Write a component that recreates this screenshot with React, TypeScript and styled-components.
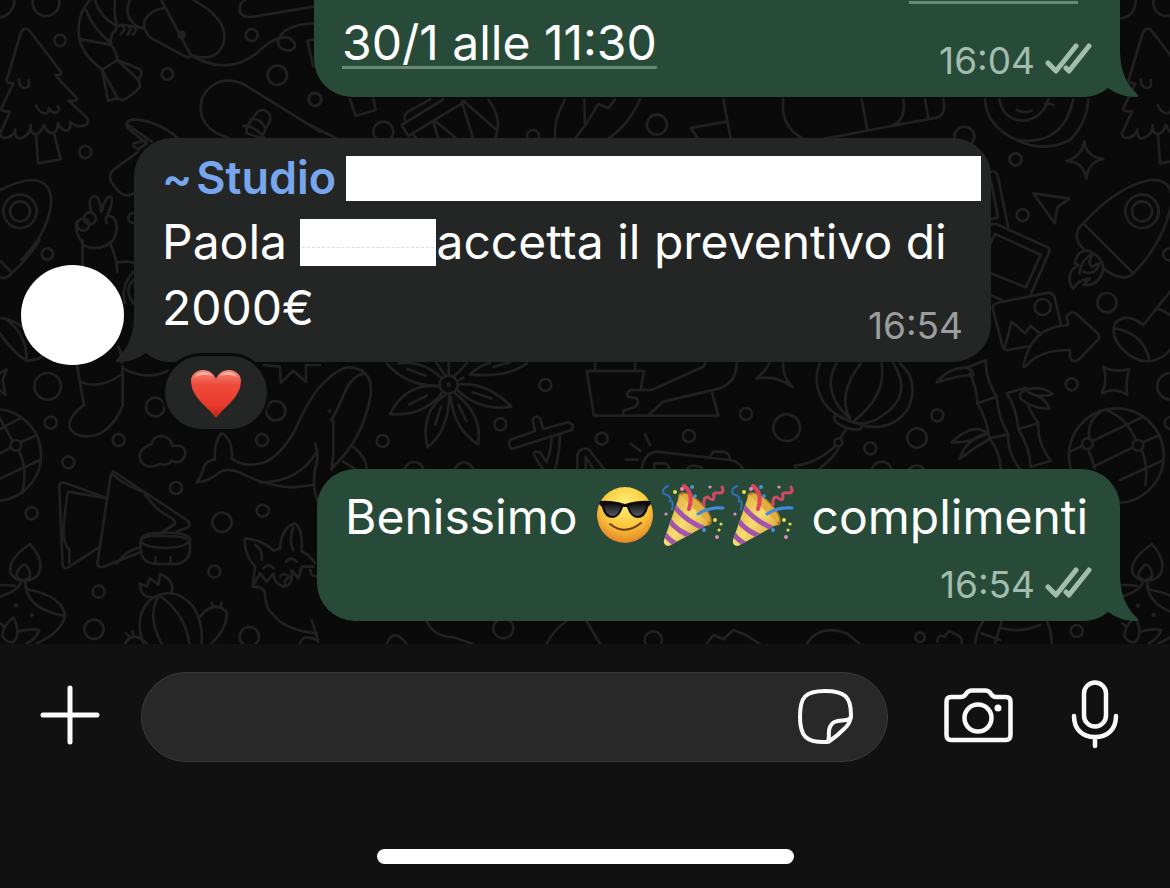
import React from "react";
import styled, { createGlobalStyle, css } from "styled-components";

const color = {
  wallpaper: "#0a0a0a",
  doodle: "#212121",
  outgoing: "#284b39",
  incoming: "#242625",
  outgoingMeta: "#a2bcae",
  incomingMeta: "#9c9d9d",
  linkRule: "#698877",
  sender: "#77a6ee",
  bar: "#111111",
  field: "#282828",
  fieldEdge: "#3a3a3a",
};

const GlobalStyle = createGlobalStyle`
  * { box-sizing: border-box; }
  body {
    margin: 0;
    background: ${color.bar};
    font-family: Inter, "Liberation Sans", sans-serif;
    color: #fff;
  }
`;

const Screen = styled.div`
  display: flex;
  flex-direction: column;
  height: 100vh;
`;

const Chat = styled.main`
  position: relative;
  flex: 1;
  min-height: 0;
  display: flex;
  flex-direction: column;
  justify-content: flex-end;
  padding-bottom: 23px;
  overflow: hidden;
  background: ${color.wallpaper};
`;

const WallpaperArt = styled.svg`
  position: absolute;
  inset: 0;
  width: 100%;
  height: 100%;
  fill: none;
  stroke: ${color.doodle};
  stroke-width: 8;
  stroke-linecap: round;
  stroke-linejoin: round;
`;

const Row = styled.div<{ $side: "in" | "out"; $gap?: number }>`
  position: relative;
  display: flex;
  flex-shrink: 0;
  align-items: flex-end;
  gap: 10px;
  justify-content: ${(p) => (p.$side === "out" ? "flex-end" : "flex-start")};
  padding: 0 50px 0 21px;
  margin-bottom: ${(p) => p.$gap ?? 0}px;
`;

const Avatar = styled.div`
  flex-shrink: 0;
  width: 103px;
  height: 100px;
  margin-bottom: -3px;
  border-radius: 50%;
  background: #fff;
`;

const Bubble = styled.article<{ $side: "in" | "out"; $width: number }>`
  position: relative;
  width: ${(p) => p.$width}px;
  max-width: 100%;
  padding: ${(p) => (p.$side === "out" ? "15px 28px 14px" : "9px 28px 14px")};
  border-radius: 38px;
  background: ${(p) => color[p.$side === "out" ? "outgoing" : "incoming"]};
`;

const TailArt = styled.svg<{ $side: "in" | "out" }>`
  position: absolute;
  bottom: 0;
  width: 52px;
  height: 49px;
  ${(p) =>
    p.$side === "out"
      ? css`
          right: -20px;
          fill: ${color.outgoing};
        `
      : css`
          left: -20px;
          fill: ${color.incoming};
          transform: scaleX(-1);
        `}
`;

const Body = styled.p`
  position: relative;
  margin: 0;
  font-size: 48px;
  line-height: 66px;
`;

const Sender = styled.h2`
  display: flex;
  align-items: center;
  gap: 4px;
  margin: 0 -18px 0 0;
  font-size: 45px;
  font-weight: 600;
  line-height: 62px;
  color: ${color.sender};
  white-space: nowrap;
`;

const NameMask = styled.span`
  flex: 1;
  height: 45px;
  margin-left: 6px;
  background: #fff;
`;

const WordMask = styled.span`
  position: relative;
  display: inline-block;
  width: 136px;
  height: 47px;
  vertical-align: -7px;
  background: #fff;

  &::after {
    content: "";
    position: absolute;
    left: 2px;
    right: 2px;
    top: 28px;
    border-top: 1px dashed #dcdcdc;
  }
`;

const DateLink = styled.a`
  color: inherit;
  text-decoration: underline;
  text-decoration-color: ${color.linkRule};
  text-decoration-thickness: 3px;
  text-underline-offset: 6px;
`;

const LinkTail = styled.span`
  display: flex;
  align-items: flex-end;
  justify-content: flex-end;
  height: 66px;
  padding: 0 14px 6px 0;

  &::after {
    content: "";
    width: 169px;
    height: 3px;
    background: ${color.linkRule};
  }
`;

const Meta = styled.footer<{ $side: "in" | "out"; $tucked?: boolean }>`
  display: flex;
  justify-content: flex-end;
  align-items: center;
  gap: 10px;
  margin-top: ${(p) => (p.$tucked ? -37 : 13)}px;
  font-size: 37px;
  line-height: 44px;
  color: ${(p) => color[p.$side === "out" ? "outgoingMeta" : "incomingMeta"]};

  svg {
    margin-bottom: 4px;
  }
`;

const Reaction = styled.button`
  position: absolute;
  left: 28px;
  bottom: -70px;
  display: flex;
  align-items: center;
  justify-content: center;
  width: 108px;
  height: 79px;
  padding: 0;
  border: 3px solid ${color.wallpaper};
  border-radius: 40px;
  background: ${color.incoming};
`;

const EmojiArt = styled.svg`
  width: 69px;
  height: 66px;
  vertical-align: top;
`;

const Composer = styled.footer`
  flex-shrink: 0;
  padding: 28px 0 24px;
  background: ${color.bar};
`;

const Tools = styled.form`
  display: flex;
  align-items: center;
  padding: 0 51px 0 40px;
`;

const IconButton = styled.button<{ $before?: number }>`
  display: flex;
  flex-shrink: 0;
  margin: 0 0 0 ${(p) => p.$before ?? 0}px;
  padding: 0;
  border: 0;
  background: none;
  color: #fafafa;

  svg {
    fill: none;
    stroke: currentColor;
    stroke-linecap: round;
    stroke-linejoin: round;
  }
`;

const Field = styled.div`
  display: flex;
  flex: 1;
  min-width: 0;
  align-items: center;
  height: 90px;
  margin-left: 41px;
  padding: 0 34px 0 36px;
  border: 1px solid ${color.fieldEdge};
  border-radius: 45px;
  background: ${color.field};
`;

const TextBox = styled.input`
  flex: 1;
  min-width: 0;
  border: 0;
  outline: 0;
  background: none;
  font: inherit;
  font-size: 45px;
  color: inherit;
`;

const HomeIndicator = styled.div`
  width: 417px;
  max-width: 60%;
  height: 15px;
  margin: 87px auto 0;
  border-radius: 8px;
  background: #fff;
`;

/* Doodles are drawn at three times their final size, in patches. */
function Patch(props: {
  x: number;
  y: number;
  dots?: number[][];
  lines: string[];
}) {
  return (
    <g transform={`translate(${props.x} ${props.y}) scale(0.33333)`}>
      {(props.dots ?? []).map(([cx, cy, r], i) => (
        <circle key={i} cx={cx} cy={cy} r={r} />
      ))}
      {props.lines.map((d, i) => (
        <path key={i} d={d} />
      ))}
    </g>
  );
}

const treeLines = [
  "M78 86Q68 86 62 100L20 240Q18 250 40 250L4 325Q2 335 30 335L0 400Q0 418 25 412Q42 405 46 388Q44 420 64 414Q92 405 92 375Q90 402 108 402Q124 400 132 374Q140 400 160 400Q172 396 174 370Q186 392 200 392Q214 390 210 365Q232 385 256 376Q272 368 258 350L206 302Q232 306 230 294L166 226Q188 226 182 214L90 94Q84 86 78 86Z",
  "M108 404L114 490L182 478L162 400",
  "M56 238Q58 264 76 264Q92 262 86 240",
  "M108 316Q116 340 138 340Q148 336 146 324Q158 344 172 336Q184 328 172 318",
];

const lampLines = [
  "M90 342Q20 390 32 430Q60 470 110 440Q140 400 90 342Z",
  "M72 402Q45 425 50 440Q70 462 90 440Q92 415 72 402Z",
  "M0 500Q60 480 62 455M76 455Q75 480 90 480Q190 500 195 560Q180 610 110 640",
  "M76 470Q90 540 195 558M0 465Q30 465 45 468",
  "M40 562Q5 590 8 620Q20 640 40 636Q65 610 40 562Z",
  "M58 604Q90 595 118 600Q105 630 80 640M0 580l15 12",
  "M48 524v6M95 552v6M45 527h6M92 555h6",
];

function Wallpaper() {
  return (
    <WallpaperArt viewBox="0 0 1170 644" preserveAspectRatio="xMinYMin slice" aria-hidden>
      <Patch x={0} y={0} lines={treeLines} />
      <Patch x={1122} y={0} lines={treeLines} />
      <Patch
        x={0}
        y={0}
        dots={[[180, 121, 17], [502, 222, 17], [755, 105, 18], [832, 226, 29], [945, 298, 18], [256, 456, 18], [138, 8, 40], [60, 634, 50], [60, 634, 30], [250, 674, 18], [270, 655, 18], [400, 654, 15], [545, 104, 9], [545, 104, 4]]}
        lines={[
          "M0 52Q30 50 43 10V0",
          "M270 0Q232 40 236 100Q240 160 306 208L324 302L345 296L370 300Q400 285 420 260L416 240Q430 220 420 208L352 180Q352 160 332 132Q330 100 348 90Q346 66 400 80L430 84",
          "M258 30Q280 90 335 130M244 118L330 134M285 0Q300 50 345 75M345 0Q342 50 350 72",
          "M306 210L352 180L416 240M306 210L354 296",
          "M368 80q12 8 -6 22M386 80q12 8 -4 24M404 82q10 8 -6 22",
          "M484 0L572 165Q568 178 548 165L450 112Q425 85 435 60Q450 30 494 24",
          "M580 0Q690 60 670 130Q650 190 572 165M390 0Q370 40 400 70Q410 84 430 84",
          "M572 165Q680 230 770 160Q830 100 870 115Q900 140 870 152Q830 150 835 120Q850 75 940 70",
          "M735 0Q715 10 720 35Q728 55 760 50L940 20",
          "M940 118L922 122L940 200",
          "M960 395L730 252Q650 220 608 290Q585 360 650 400L690 416",
          "M740 380l30 -42q20 -18 38 4q8 16 -6 36l-20 40M730 378q30 -5 66 38M752 358q30 -5 44 28M740 380v20l50 16",
          "M536 416Q470 360 400 358Q370 364 384 385L440 430M384 375L455 425M440 430l-25 18q-20 -10 -14 -18l40 -10",
          "M415 455L340 510Q320 530 340 555Q370 600 402 580",
          "M0 570Q60 540 100 540Q150 545 154 600Q150 690 65 780",
          "M248 800V730Q220 690 232 664M275 640Q260 590 285 588Q300 590 304 636Q315 590 332 590Q344 600 322 645",
          "M320 670Q310 640 340 652Q360 680 340 720Q300 760 248 735",
        ]}
      />
      <Patch
        x={310}
        y={0}
        dots={[[15, 298, 20], [220, 395, 30], [669, 408, 18], [1041, 374, 30]]}
        lines={[
          "M120 298L137 348L197 330L190 298M0 375L80 416",
          "M285 360Q280 345 295 335L360 298M275 375L400 298M275 375L295 408L465 305M310 405L320 416",
          "M370 365L385 416M375 362L440 416M455 305L490 416M460 302L560 390M535 298Q580 360 555 416",
          "M765 298Q730 360 735 416M823 298L825 375M795 416L830 370L865 312L895 325L915 298M990 298Q960 370 895 416",
          "M1240 298L1262 416M1250 365L1142 384L1165 416",
        ]}
      />
      <Patch
        x={730}
        y={0}
        dots={[[703, 410, 30], [857, 478, 18], [1310, 8, 40]]}
        lines={[
          "M160 298Q150 380 220 416M395 298L412 392M520 298Q530 360 485 378L285 416M585 298L595 355M640 298Q650 345 620 353L485 378",
          "M765 298Q770 380 860 420Q940 460 1020 420Q1070 370 1075 298",
          "M808 298Q820 360 880 362Q940 355 955 298M860 330q25 12 45 2M945 310l25 4",
          "M1030 298Q1000 440 860 420M1218 0Q1215 50 1172 55",
        ]}
      />
      <Patch
        x={970}
        y={130}
        dots={[[136, 88, 18], [158, 255, 18], [411, 518, 29], [598, 373, 18], [516, 244, 50], [516, 244, 30], [218, 531, 24]]}
        lines={[
          "M343 34Q348 80 400 87Q355 95 349 145Q340 95 290 93Q335 80 343 34Z",
          "M190 190L298 206L262 232L254 280Z",
          "M340 280Q315 300 322 330Q330 350 345 360M400 415Q440 445 465 442Q480 440 490 430L340 280Q440 170 540 150Q610 145 605 220Q580 340 490 430",
          "M315 400Q320 360 355 362Q400 380 400 420Q385 470 340 465L360 445Q320 450 310 478Q290 450 305 420L325 405Z",
          "M328 430Q335 385 370 370Q350 400 365 410L388 400Q375 440 340 425",
          "M62 126Q80 120 84 140L116 300M62 150L84 262L62 268",
          "M62 285Q70 278 85 285L230 350Q242 356 236 370L180 498M62 340L75 312L212 374L168 472L62 430M62 495L100 512",
          "M180 648L115 660Q102 662 98 650L68 535Q70 520 85 518L235 488Q250 488 255 505L272 580M105 650L125 575L165 610L182 588L212 612",
          "M160 710Q180 590 295 585L290 560Q300 540 320 552L385 612Q390 620 385 628L325 690Q305 700 300 680V660Q220 660 180 695Q165 715 160 710Z",
          "M600 485L520 585Q470 545 435 580Q420 620 460 660Q500 700 545 693Q580 685 600 660M435 595Q520 610 538 690M560 535Q580 540 600 555",
        ]}
      />
      <Patch
        x={0}
        y={240}
        dots={[[142, 42, 17], [143, 439, 40], [152, 548, 18], [466, 501, 28], [827, 512, 29]]}
        lines={[
          "M118 0Q90 50 35 100Q15 120 0 112M0 62L36 98",
          "M248 0V75M330 10Q350 50 352 95M352 68Q380 62 400 68M400 95Q360 140 375 190M400 120Q370 150 400 190",
          "M0 234Q60 240 90 290M0 280Q40 340 80 362Q110 362 125 350M20 240Q80 280 80 362",
          "M0 400L20 388L8 420L16 465L0 450",
          "M230 372L252 495Q205 530 208 560Q225 600 290 585Q345 560 368 495V380M240 425Q300 450 362 405M355 320Q365 340 365 370",
          "M370 385Q440 425 510 390M790 375L840 380L842 428L880 392L918 425V375M920 375H960",
        ]}
      />
      <Patch
        x={0}
        y={430}
        dots={[[-15, 75, 138], [48, 46, 16], [356, 30, 18], [205, 97, 18], [95, 250, 18], [528, 174, 18], [786, 30, 18], [788, 242, 18], [666, 277, 29], [643, 425, 18], [296, 485, 18], [282, 598, 29], [748, 620, 29]]}
        lines={[
          "M62 36L110 16M34 52L0 70M38 34L20 0L-10 -50M56 60Q85 120 66 190M0 146L120 90M-5 0L60 -35",
          "M455 42Q460 18 485 18Q512 20 517 48Q558 40 556 75Q545 105 515 92Q505 108 480 102Q450 120 425 98Q405 60 455 42Z",
          "M322 205L190 157Q176 158 178 175L188 405Q192 420 205 412L296 352",
          "M322 205L205 185Q200 190 190 300Q190 340 208 360V400",
          "M530 305L565 292Q575 282 560 270L340 124Q332 130 330 150L292 400Q295 415 310 410L425 365",
          "M340 135Q380 170 430 185Q460 230 490 250Q540 275 520 285L490 304M350 400Q380 360 420 352",
          "M422 330Q425 308 496 308Q565 308 570 328Q565 352 496 354Q425 352 422 330V360Q425 400 470 402H530Q570 395 570 355V330M430 325Q450 315 496 318Q550 318 560 328M466 382v16M512 382v16",
          "M590 157Q625 155 655 130Q680 110 720 128Q800 170 880 172L940 165M590 157Q605 140 612 110Q620 90 645 88Q640 40 665 8Q700 30 695 85Q730 115 790 98Q840 80 885 0Q925 -90 960 -130",
          "M780 158Q900 155 950 65M945 40Q960 80 945 120Q935 170 955 220",
          "M470 500Q420 510 420 460L440 470L450 445L475 465L480 432Q525 450 515 490",
          "M430 640Q400 560 450 510Q520 460 580 530Q610 580 605 640M475 500Q440 560 485 640M480 498Q555 550 568 640",
          "M600 560Q640 510 680 545Q685 590 635 640M440 640Q400 600 375 640M635 518l4 12M665 518l-4 12M378 610l8 8M398 603l2 10",
          "M950 610Q850 600 815 548Q800 540 795 500Q800 470 758 470L765 410Q730 370 735 325Q790 330 820 362L840 355Q845 290 885 280Q910 300 905 365Q925 370 945 400",
          "M765 345Q790 360 785 390M880 292Q865 330 880 362M790 415q15 -18 32 0M858 395q15 -18 32 0M840 440Q850 425 868 440L855 452V465",
          "M758 470L780 430L800 455L820 430Q820 460 850 470Q880 470 875 420L895 445L905 410H940M930 420l5 15l15 5M900 640Q910 610 950 630M935 570l20 65",
        ]}
      />
      <Patch x={0} y={430} lines={lampLines} />
      <Patch x={1122} y={430} lines={lampLines} />
      <Patch
        x={320}
        y={355}
        dots={[[28, 168, 2], [386, 89, 27], [386, 89, 3], [676, 90, 18], [541, 208, 18], [188, 258, 18], [845, 251, 18], [1107, 243, 18], [282, 350, 29], [432, 352, 29]]}
        lines={[
          "M0 95Q60 30 100 38Q160 50 152 120Q130 250 40 335M35 345L40 300V200L35 195Q60 150 80 100Q100 60 135 55M100 275Q140 310 140 340M70 320L105 342",
          "M200 25Q260 95 360 92M235 25Q310 15 365 70M210 177Q260 80 358 95M210 177Q310 185 365 115",
          "M322 277Q300 170 375 120M322 277Q385 230 388 120M474 268Q490 180 405 115M474 268Q400 220 392 125",
          "M574 155Q500 80 415 88M574 155Q480 170 412 105M620 25Q560 70 450 58Q480 30 510 24",
          "M350 25L376 62M386 25V58M440 25L402 65M262 42l55 20M268 148l52 -26M345 210l18 -55M415 148l24 50M458 112l55 18M520 36l50 -14M418 75l12 -6",
          "M645 228L570 255Q562 268 575 282L755 225Q765 210 745 202L670 222L660 190Q645 178 638 195ZM720 235Q720 290 705 345M695 242Q695 280 680 322L660 292Q640 285 642 300L670 345",
          "M772 345V300Q780 275 805 282L855 345M797 345V305L822 345",
          "M962 104L972 48H800L822 182H1195L1175 108M825 48V25M945 48V25",
          "M1155 25Q1155 35 1140 40L995 105H935Q918 110 922 125L950 130Q960 145 945 155L910 168V180M985 180L1030 140L1200 100Q1250 80 1250 25",
          "M965 345Q970 295 1010 290L1230 315Q1260 320 1270 345M1170 305l10 -15h30q20 5 20 22M1003 345v-20h35q10 5 8 20M1100 345q5 -20 45 -8v8M975 237l15 34M932 266l30 22M918 314h35",
        ]}
      />
      <Patch
        x={740}
        y={355}
        dots={[[18, 177, 18], [140, 218, 40], [391, 280, 18], [592, 181, 18], [531, 249, 29], [995, 88, 18], [1292, 94, 40], [1292, 204, 18], [425, 350, 30], [530, 362, 30], [295, 262, 12], [1129, 302, 142], [1042, 266, 16], [1194, 271, 16]]}
        lines={[
          "M88 25Q75 50 50 70Q110 60 157 96Q125 60 130 25",
          "M240 25Q215 80 250 140Q270 170 310 190M290 25Q250 90 300 160L330 192M362 25Q290 120 330 190M425 25Q440 120 345 195M460 25Q520 120 430 180Q400 205 360 205M480 25Q540 80 505 160Q460 230 370 212",
          "M290 178Q275 190 290 203Q330 230 360 222L368 208Q320 200 290 178ZM318 222L302 250M287 272Q230 325 165 332L168 340M298 275Q280 310 240 340",
          "M680 38L738 15Q735 70 770 125Q775 190 805 238Q800 290 838 340M712 145L770 125M690 55Q710 100 712 145Q740 190 748 250Q780 290 782 340M748 250L805 238",
          "M700 60Q660 60 590 82Q630 35 680 38Q700 45 700 60M742 235Q700 200 635 262Q690 265 740 235M658 312Q680 250 742 235M658 312Q700 280 748 252",
          "M860 98L800 115Q830 160 835 222Q870 280 872 335L932 318Q890 260 895 205Q870 170 865 150M835 222L895 205",
          "M845 110Q900 85 938 118Q900 130 865 112Q920 130 928 162Q880 160 845 135Q835 120 845 110Z",
          "M1090 35Q1125 55 1168 42Q1155 80 1162 120Q1125 95 1085 115Q1105 75 1090 35Z",
          "M1028 272L990 290M1058 258L1210 185M1210 262L1258 240M1178 278L1060 335M1265 318L1140 375M1048 250Q1040 200 1080 172M1100 165Q1160 190 1188 255M1205 285Q1225 330 1216 390M1045 282L1065 340",
        ]}
      />
      <Patch
        x={920}
        y={550}
        dots={[[470, 243, 18], [0, 262, 14], [-1250, 235, 30], [-800, 270, 26]]}
        lines={[
          "M52 275Q50 250 75 260Q85 235 100 250Q130 260 125 280",
          "M165 282Q170 240 190 213M395 282Q395 240 380 213M185 250L240 270M245 213L225 282M245 235Q300 250 360 225",
          "M-1600 282Q-1580 230 -1540 282M-1480 213Q-1460 260 -1400 262L-1340 282M-1120 282Q-1100 240 -1060 213M-1000 213L-960 282M-640 282L-620 255L-590 268L-560 240L-520 256L-480 282M-340 282Q-300 220 -220 250L-180 282",
        ]}
      />
    </WallpaperArt>
  );
}

function Tail({ side }: { side: "in" | "out" }) {
  return (
    <TailArt $side={side} viewBox="0 0 52 49" overflow="visible" aria-hidden>
      <path d="M32 0C32 22 37 34 50 47Q51 49 48 49Q32 49 20 40Q10 49 -6 49L10 20L28 0Z" />
    </TailArt>
  );
}

function Checks() {
  return (
    <svg width="47" height="32" viewBox="0 0 47 32" fill="none" stroke="currentColor" strokeWidth="5" strokeLinecap="round" strokeLinejoin="round" role="img" aria-label="Consegnato">
      <path d="M3 20L11 28L31 3M21 25L24 28L44 3" />
    </svg>
  );
}

function Sunglasses() {
  return (
    <EmojiArt viewBox="0 0 69 66" role="img" aria-label="Faccina con occhiali da sole">
      <defs>
        <radialGradient id="face" cx="50%" cy="30%" r="70%">
          <stop offset="0" stopColor="#fff07c" />
          <stop offset="0.55" stopColor="#fbcb3c" />
          <stop offset="1" stopColor="#e5862a" />
        </radialGradient>
        <linearGradient id="lens" x1="0" y1="0" x2="0" y2="1">
          <stop offset="0" stopColor="#111" />
          <stop offset="1" stopColor="#555a60" />
        </linearGradient>
      </defs>
      <circle cx="34" cy="31" r="28" fill="url(#face)" />
      <path d="M19 40Q34 52 50 39" fill="none" stroke="#6b3c12" strokeWidth="2" strokeLinecap="round" />
      <path d="M9 17Q20 16 34 20Q48 16 59 17L60 20L57 23Q55 34 46 34Q39 33 36 23H32Q29 33 22 34Q13 34 11 23L8 20Z" fill="#0c0c0c" />
      <path d="M13 21Q22 18 30 22Q28 31 22 32Q14 31 13 21ZM38 22Q46 18 55 21Q54 31 46 32Q40 31 38 22Z" fill="url(#lens)" />
    </EmojiArt>
  );
}

function Popper() {
  return (
    <EmojiArt viewBox="0 0 69 66" role="img" aria-label="Spara coriandoli">
      <defs>
        <linearGradient id="cone" x1="0" y1="0" x2="1" y2="1">
          <stop offset="0" stopColor="#d79b28" />
          <stop offset="0.5" stopColor="#f7dd72" />
          <stop offset="1" stopColor="#c98f2b" />
        </linearGradient>
        <clipPath id="coneShape">
          <path d="M20 10L49 40L9 62Q3 62 4 56Z" />
        </clipPath>
      </defs>
      <ellipse cx="35" cy="25" rx="22" ry="9" transform="rotate(45 35 25)" fill="#b97b20" />
      <ellipse cx="36" cy="24" rx="19" ry="6" transform="rotate(45 36 24)" fill="#dfae3d" />
      <path d="M20 10L49 40L9 62Q3 62 4 56Z" fill="url(#cone)" />
      <g clipPath="url(#coneShape)" fill="none" stroke="#a355ad" strokeWidth="5">
        <path d="M14 22Q26 38 48 46M9 36Q17 48 36 54M3 48Q10 58 20 62" />
      </g>
      <g fill="none" strokeLinecap="round">
        <path d="M24 2Q34 9 29 25" stroke="#df455c" strokeWidth="4" />
        <path d="M38 30Q48 23 63 24" stroke="#3f8be0" strokeWidth="3" />
        <path d="M8 2Q1 5 4 10Q12 12 10 17Q14 16 12 26" stroke="#356fb8" strokeWidth="2" />
        <path d="M44 21Q43 13 48 13Q54 19 54 12Q52 8 59 9Q65 9 62 3" stroke="#d14b69" strokeWidth="3" />
      </g>
      <g fill="#e9dc4f">
        <circle cx="15" cy="8" r="2" />
        <circle cx="55" cy="36" r="2" />
        <circle cx="61" cy="40" r="1.6" />
        <circle cx="59" cy="46" r="1.6" />
      </g>
      <g fill="#e28bc0">
        <circle cx="22" cy="5" r="2" />
        <circle cx="50" cy="3" r="1.6" />
        <circle cx="6" cy="30" r="1.6" />
        <circle cx="57" cy="53" r="2" />
      </g>
      <g fill="#4a90e2">
        <circle cx="32" cy="3" r="2" />
        <circle cx="35" cy="12" r="1.8" />
        <circle cx="44" cy="46" r="2" />
      </g>
    </EmojiArt>
  );
}

function Heart() {
  return (
    <svg width="52" height="52" viewBox="0 0 52 52" role="img" aria-label="Cuore rosso">
      <defs>
        <linearGradient id="heartFill" x1="0" y1="0" x2="0" y2="1">
          <stop offset="0" stopColor="#f58a7c" />
          <stop offset="0.3" stopColor="#ef4c3c" />
          <stop offset="0.75" stopColor="#e8392c" />
          <stop offset="1" stopColor="#b3251b" />
        </linearGradient>
      </defs>
      <path d="M26 51Q24 49 20 44C12 36 1 27 1 14C1 7 7 3 13 3C20 3 24 7 26 12C28 7 32 3 39 3C45 3 51 7 51 14C51 27 40 36 32 44Q28 49 26 51Z" fill="url(#heartFill)" />
      <path d="M5 10Q8 5 14 5Q19 5 22 9Q13 6 5 10ZM30 9Q33 5 38 5Q44 5 47 10Q39 6 30 9Z" fill="#fbb3a8" />
    </svg>
  );
}

export default function App() {
  return (
    <Screen>
      <GlobalStyle />
      <Chat>
        <Wallpaper />
        <Row $side="out" $gap={41}>
          <Bubble $side="out" $width={806}>
            <Tail side="out" />
            <Body>
              <LinkTail />
              <DateLink href="#appuntamento">30/1 alle 11:30</DateLink>
            </Body>
            <Meta $side="out" $tucked>
              <time>16:04</time>
              <Checks />
            </Meta>
          </Bubble>
        </Row>
        <Row $side="in" $gap={107}>
          <Avatar />
          <Bubble $side="in" $width={857}>
            <Tail side="in" />
            <Sender>
              <span>~</span>
              <span>Studio</span>
              <NameMask />
            </Sender>
            <Body>
              Paola <WordMask />accetta il preventivo di 2000€
            </Body>
            <Meta $side="in" $tucked>
              <time>16:54</time>
            </Meta>
            <Reaction type="button">
              <Heart />
            </Reaction>
          </Bubble>
        </Row>
        <Row $side="out">
          <Bubble $side="out" $width={803}>
            <Tail side="out" />
            <Body>
              Benissimo <Sunglasses />
              <Popper />
              <Popper /> complimenti
            </Body>
            <Meta $side="out">
              <time>16:54</time>
              <Checks />
            </Meta>
          </Bubble>
        </Row>
      </Chat>
      <Composer>
        <Tools onSubmit={(e) => e.preventDefault()}>
          <IconButton type="button" aria-label="Allega">
            <svg width="60" height="64" viewBox="0 0 60 64" strokeWidth="5">
              <path d="M30 3V57M3 30H57" />
            </svg>
          </IconButton>
          <Field>
            <TextBox type="text" aria-label="Messaggio" />
            <IconButton type="button" aria-label="Sticker">
              <svg width="55" height="56" viewBox="0 0 55 56" strokeWidth="4">
                <path d="M29 53C8 54 2 47 2 28C2 8 7 2 27 2C47 2 53 8 53 26Q53 34 46 40Q39 47 33 51Q31 53 29 53C33 49 29 44 32 38C35 31 41 32 48 31Q51 31 53 28" />
              </svg>
            </IconButton>
          </Field>
          <IconButton type="button" aria-label="Fotocamera" $before={56}>
            <svg width="69" height="58" viewBox="0 0 69 58" strokeWidth="4.5">
              <path d="M7 9H17Q20 9 22 6Q24 2.500 28 2.500H41Q45 2.500 47 6Q49 9 52 9H62Q66.500 9 66.500 14V47Q66.500 52 62 52H7Q2.500 52 2.500 47V14Q2.500 9 7 9Z" />
              <circle cx="34" cy="30" r="13.5" />
              <circle cx="54" cy="20" r="3.5" fill="currentColor" stroke="none" />
            </svg>
          </IconButton>
          <IconButton type="button" aria-label="Messaggio vocale" $before={58}>
            <svg width="48" height="74" viewBox="0 0 48 74" strokeWidth="4.5">
              <rect x="13" y="2.500" width="22" height="44" rx="11" />
              <path d="M3 36C3 49 11 57 24 57S45 49 45 36M24 57V66" />
            </svg>
          </IconButton>
        </Tools>
        <HomeIndicator />
      </Composer>
    </Screen>
  );
}
